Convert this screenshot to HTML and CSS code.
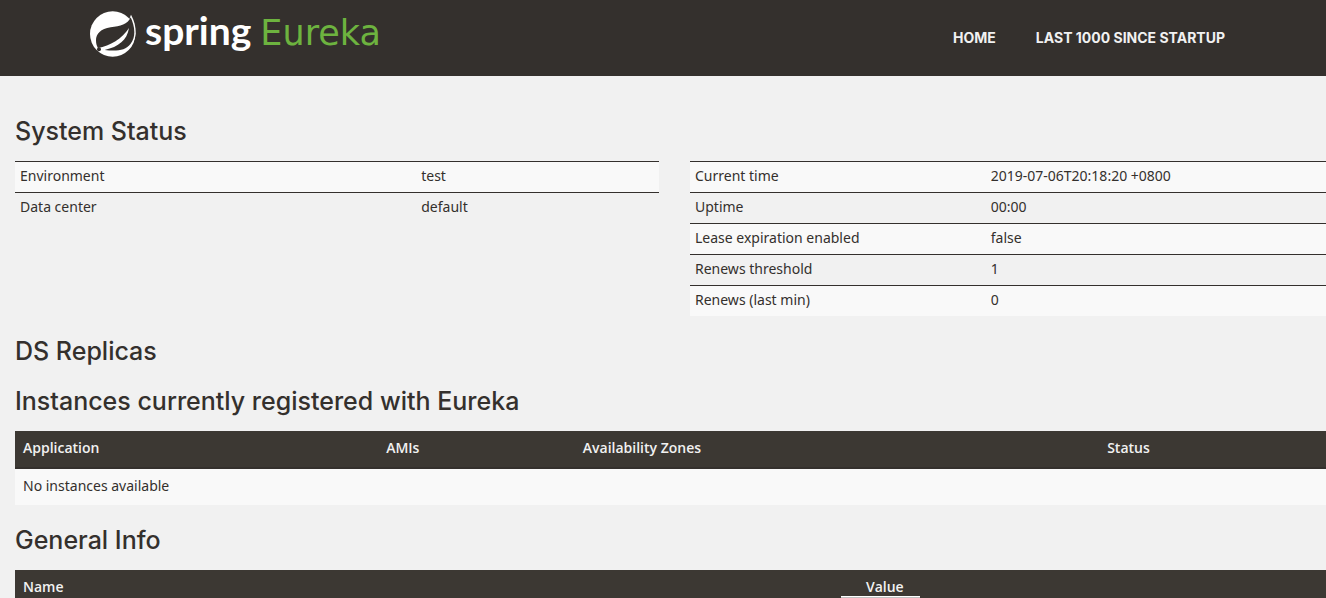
FILE: index.html
```html
<!DOCTYPE html>
<html lang="en">
<head>
<meta charset="utf-8">
<meta name="viewport" content="width=device-width, initial-scale=1">
<title>Eureka</title>
<link rel="stylesheet" href="styles.css">
</head>
<body>
<header class="navbar">
  <a class="brand" href="#">
    <svg class="brand-mark" viewBox="18 15 138 138" aria-hidden="true">
      <circle cx="86" cy="84" r="68" fill="#fff"/>
      <path d="M141 26 C150 42 156 62 155 82 C154 96 149 108 141 118 L128 60 Z" fill="#fff"/>
      <path d="M140 34 C131 56 109 61 80 64 C50 68 36 84 36 103 C36 112 38 120 42 126 C78 120 115 98 135 66 C129 103 104 122 62 132 C98 136 124 134 140 113 C158 89 151 59 140 34 Z" fill="#34302d"/>
      <circle cx="45" cy="130" r="6" fill="#34302d"/>
    </svg>
    <span class="brand-spring">spring</span>
    <span class="brand-eureka">Eureka</span>
  </a>
  <nav class="nav-links">
    <a href="#">HOME</a>
    <a href="#">LAST 1000 SINCE STARTUP</a>
  </nav>
</header>
<main class="content">
  <h1>System Status</h1>
  <div class="status-grid">
    <table class="info info-env">
      <tbody>
        <tr><td>Environment</td><td>test</td></tr>
        <tr><td>Data center</td><td>default</td></tr>
      </tbody>
    </table>
    <table class="info info-runtime">
      <tbody>
        <tr><td>Current time</td><td>2019-07-06T20:18:20 +0800</td></tr>
        <tr><td>Uptime</td><td>00:00</td></tr>
        <tr><td>Lease expiration enabled</td><td>false</td></tr>
        <tr><td>Renews threshold</td><td>1</td></tr>
        <tr><td>Renews (last min)</td><td>0</td></tr>
      </tbody>
    </table>
  </div>
  <h1>DS Replicas</h1>
  <h1>Instances currently registered with Eureka</h1>
  <table class="list">
    <thead>
      <tr><th class="col-app">Application</th><th class="col-ami">AMIs</th><th class="col-zone">Availability Zones</th><th>Status</th></tr>
    </thead>
    <tbody>
      <tr><td colspan="4">No instances available</td></tr>
    </tbody>
  </table>
  <h1>General Info</h1>
  <table class="list">
    <thead>
      <tr><th class="col-name">Name</th><th class="col-value">Value</th></tr>
    </thead>
  </table>
</main>
</body>
</html>
```
FILE: styles.css
```css
* { box-sizing: border-box; }

html, body { height: 100%; }

body {
  margin: 0;
  overflow: hidden;
  background: #f1f1f1;
  color: #34302d;
  font-family: "Noto Sans", sans-serif;
  font-size: 14px;
  line-height: 20px;
}

.navbar {
  display: flex;
  align-items: center;
  justify-content: space-between;
  height: 76px;
  padding: 0 101px 0 90px;
  background: #34302d;
}

.brand {
  display: flex;
  align-items: baseline;
  height: 76px;
  color: #fff;
  line-height: 60px;
  text-decoration: none;
}

.brand-mark {
  align-self: flex-start;
  width: 46px;
  height: 46px;
  margin: 11px 9px 0 0;
}

.brand-spring {
  font-family: Lato, sans-serif;
  font-size: 39px;
  font-weight: 700;
}

.brand-eureka {
  margin-left: 9px;
  color: #6db33f;
  font-family: "DejaVu Sans", sans-serif;
  font-size: 35px;
}

.nav-links {
  display: flex;
  gap: 40px;
}

.nav-links a {
  color: #f1f1f1;
  font-family: Inter, sans-serif;
  font-weight: 700;
  text-decoration: none;
}

.content { padding: 40px 0 0 15px; }

h1 {
  margin: 20px 0 15px;
  font-family: Inter, sans-serif;
  font-size: 25px;
  font-weight: 500;
  line-height: 30px;
}

.content h1:first-child { margin-top: 0; }

.status-grid {
  display: grid;
  grid-template-columns: 644fr 636fr;
  gap: 31px;
  align-items: start;
}

table {
  width: 100%;
  border-spacing: 0;
  table-layout: fixed;
}

th, td { text-align: left; }

.info td {
  padding: 4px 5px 6px;
  border-top: 1px solid #34302d;
}

.info tr:nth-child(odd), .list tbody tr { background: #f9f9f9; }

.info-env td:first-child { width: 62.3%; }
.info-runtime td:first-child { width: 46.5%; }

.list th {
  padding: 7px 8px 9px;
  border-bottom: 2px solid #34302d;
  background: #3c3833;
  color: #f1f1f1;
  font-family: "Open Sans", sans-serif;
  font-weight: 600;
}

.list td { padding: 7px 8px 9px; }

.col-app { width: 27.7%; }
.col-ami { width: 15%; }
.col-zone { width: 40%; }
.col-name { width: 64.3%; }

.col-value { position: relative; }

.col-value::after {
  content: "";
  position: absolute;
  top: 26px;
  left: -17px;
  width: 79px;
  height: 12px;
  border-top: 1px solid #fff;
  background: #c0c0c0;
}
```
